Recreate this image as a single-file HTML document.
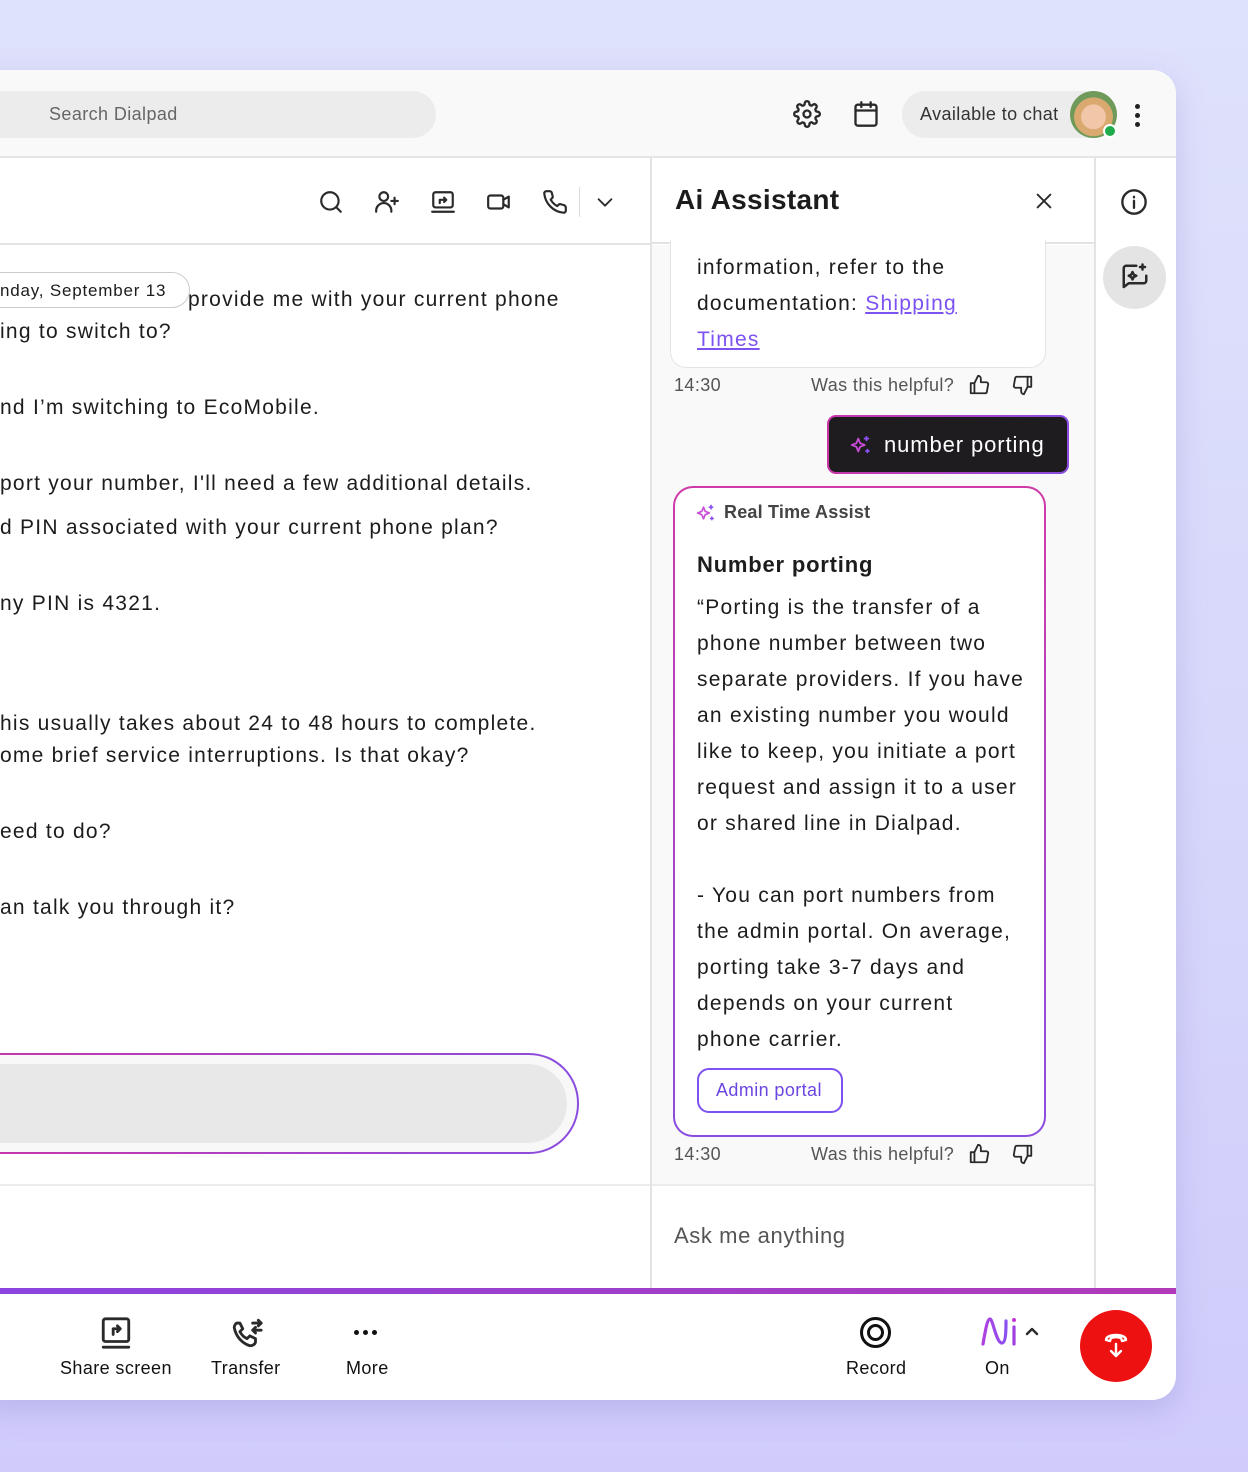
<!DOCTYPE html>
<html><head><meta charset="utf-8">
<style>
*{margin:0;padding:0;box-sizing:border-box}
body{width:1248px;height:1472px;overflow:hidden;background:linear-gradient(180deg,#dfe2fb 0%,#d6d6fb 60%,#d0cbfb 100%);font-family:"Liberation Sans",sans-serif;color:#1c1c1c;position:relative}
.win{position:absolute;left:-30px;top:70px;width:1206px;height:1330px;background:#fff;border-radius:24px;overflow:hidden;box-shadow:0 10px 30px rgba(120,110,200,.25)}
.abs{position:absolute}
.t{position:absolute;white-space:nowrap;font-size:21px;color:#1c1c1c}
.c{letter-spacing:1.25px}
.s{letter-spacing:0.4px}
svg{position:absolute;fill:none;stroke:#2a2a2a;stroke-width:2;stroke-linecap:round;stroke-linejoin:round}
</style></head><body>
<div class="win">
 <!-- top bar -->
 <div class="abs" style="left:0;top:0;width:1206px;height:88px;background:#f9f9f9;border-bottom:2px solid #e6e6e6"></div>
 <div class="abs" style="left:0;top:21px;width:466px;height:47px;background:#ececec;border-radius:24px"></div>
 <div class="t s" style="left:79px;top:34px;font-size:18px;color:#666">Search Dialpad</div>
 <svg style="left:823px;top:30px" width="28" height="28" viewBox="0 0 24 24"><circle cx="12" cy="12" r="3"/><path d="M19.4 15a1.65 1.65 0 0 0 .33 1.82l.06.06a2 2 0 1 1-2.830 2.83l-.06-.06a1.65 1.65 0 0 0-1.82-.33 1.65 1.65 0 0 0-1 1.51V21a2 2 0 1 1-4 0v-.09A1.65 1.65 0 0 0 9 19.4a1.650 1.65 0 0 0-1.82.33l-.06.06a2 2 0 1 1-2.83-2.83l.06-.06A1.65 1.65 0 0 0 4.68 15a1.65 1.65 0 0 0-1.51-1H3a2 2 0 1 1 0-4h.09A1.65 1.65 0 0 0 4.6 9a1.65 1.65 0 0 0-.33-1.82l-.06-.06a2 2 0 1 1 2.83-2.83l.06.06A1.65 1.65 0 0 0 9 4.68a1.65 1.65 0 0 0 1-1.51V3a2 2 0 1 1 4 0v.09a1.65 1.65 0 0 0 1 1.51 1.65 1.65 0 0 0 1.82-.33l.06-.06a2 2 0 1 1 2.830 2.83l-.06.06A1.65 1.65 0 0 0 19.4 9a1.65 1.65 0 0 0 1.51 1H21a2 2 0 1 1 0 4h-.09a1.65 1.65 0 0 0-1.51 1z"/></svg>
 <svg style="left:882px;top:30px" width="28" height="28" viewBox="0 0 24 24"><rect x="3" y="4" width="18" height="18" rx="2"/><path d="M3 9h18M8 2v4M16 2v4"/></svg>
 <div class="abs" style="left:932px;top:21px;width:215px;height:47px;background:#ececec;border-radius:24px"></div>
 <div class="t s" style="left:950px;top:34px;font-size:18px;color:#333">Available to chat</div>
 <div class="abs" style="left:1100px;top:21px;width:47px;height:47px;border-radius:50%;background:radial-gradient(circle at 50% 55%,#f2c6a8 0 35%,#d9a96f 36% 55%,#6f9a5a 56%)"></div>
 <div class="abs" style="left:1133px;top:54px;width:14px;height:14px;border-radius:50%;background:#1faa4b;border:2px solid #fff"></div>
 <div class="abs" style="left:1165px;top:34px;width:5px;height:5px;border-radius:50%;background:#222;box-shadow:0 9px 0 #222,0 18px 0 #222"></div>

 <!-- left header -->
 <div class="abs" style="left:0;top:173px;width:680px;height:2px;background:#e3e3e3"></div>
 <svg style="left:348px;top:119px" width="26" height="26" viewBox="0 0 24 24"><circle cx="11" cy="11" r="8"/><path d="M17 17l4 4"/></svg>
 <svg style="left:403px;top:119px" width="28" height="26" viewBox="0 0 24 24"><circle cx="9" cy="7" r="4"/><path d="M2 21v-1a7 7 0 0 1 14 0v1M19 8v6M16 11h6"/></svg>
 <svg style="left:459px;top:119px" width="28" height="26" viewBox="0 0 24 24"><rect x="3" y="3" width="18" height="14" rx="2"/><path d="M2 21h20M9 13v-3h6M13 8l2 2-2 2"/></svg>
 <svg style="left:515px;top:119px" width="28" height="26" viewBox="0 0 24 24"><rect x="2" y="6" width="14" height="12" rx="2"/><path d="M16 10l5-3v10l-5-3"/></svg>
 <svg style="left:572px;top:119px" width="26" height="26" viewBox="0 0 24 24"><path d="M22 16.9v3a2 2 0 0 1-2.2 2A19.8 19.8 0 0 1 2.1 4.2 2 2 0 0 1 4.1 2h3a2 2 0 0 1 2 1.7c.1.9.4 1.8.7 2.7a2 2 0 0 1-.5 2.1L8 9.8a16 16 0 0 0 6 6l1.3-1.3a2 2 0 0 1 2.1-.4c.9.3 1.8.6 2.7.7a2 2 0 0 1 1.7 2z"/></svg>
 <div class="abs" style="left:609px;top:117px;width:1px;height:30px;background:#ddd"></div>
 <svg style="left:624px;top:121px" width="22" height="22" viewBox="0 0 24 24"><path d="M5 9l7 7 7-7"/></svg>

 <!-- chat texts -->
 <div class="abs" style="left:0;top:202px;width:220px;height:36px;border:1px solid #ccc;border-radius:18px;background:#fff"></div>
 <div class="t" style="left:30px;top:211px;font-size:17px;letter-spacing:0.8px">nday, September 13</div>
 <div class="t c" style="left:218px;top:218px">provide me with your current phone</div>
 <div class="t c" style="left:30px;top:250px">ing to switch to?</div>
 <div class="t c" style="left:30px;top:326px">nd I’m switching to EcoMobile.</div>
 <div class="t c" style="left:30px;top:402px">port your number, I'll need a few additional details.</div>
 <div class="t c" style="left:30px;top:446px">d PIN associated with your current phone plan?</div>
 <div class="t c" style="left:30px;top:522px">ny PIN is 4321.</div>
 <div class="t c" style="left:30px;top:642px">his usually takes about 24 to 48 hours to complete.</div>
 <div class="t c" style="left:30px;top:674px">ome brief service interruptions. Is that okay?</div>
 <div class="t c" style="left:30px;top:750px">eed to do?</div>
 <div class="t c" style="left:30px;top:826px">an talk you through it?</div>

 <!-- input -->
 <div class="abs" style="left:0;top:983px;width:609px;height:101px;border-radius:0 50px 50px 0;background:linear-gradient(90deg,#c936a8,#8a4de0);padding:2px 2px 2px 0">
  <div style="width:100%;height:100%;background:#f8f8f8;border-radius:0 48px 48px 0;padding:9px 10px 9px 0"><div style="width:100%;height:100%;background:#e8e8e8;border-radius:0 40px 40px 0"></div></div>
 </div>
 <div class="abs" style="left:0;top:1114px;width:680px;height:2px;background:#ececec"></div>

 <!-- AI panel -->
 <div class="abs" style="left:680px;top:88px;width:2px;height:1130px;background:#e3e3e3"></div>
 <div class="abs" style="left:682px;top:88px;width:442px;height:86px;background:#fff;border-bottom:2px solid #e3e3e3"></div>
 <div class="t" style="left:705px;top:114px;font-size:28px;font-weight:bold;letter-spacing:0.3px">Ai Assistant</div>
 <svg style="left:1063px;top:120px" width="22" height="22" viewBox="0 0 24 24"><path d="M5 5l14 14M19 5L5 19"/></svg>
 <div class="abs" style="left:682px;top:175px;width:442px;height:940px;background:#f9f9f9"></div>
 <div class="abs" style="left:1124px;top:88px;width:2px;height:1130px;background:#e3e3e3"></div>

 <div class="abs" style="left:700px;top:170px;width:376px;height:128px;background:#fff;border:1px solid #e4e4e4;border-top:none;border-radius:0 0 16px 16px"></div>
 <div class="t c" style="left:727px;top:186px">information, refer to the</div>
 <div class="t c" style="left:727px;top:222px">documentation: <span style="color:#7c52f0;text-decoration:underline">Shipping</span></div>
 <div class="t c" style="left:727px;top:258px;color:#7c52f0;text-decoration:underline">Times</div>
 <div class="t s" style="left:704px;top:305px;font-size:18px;color:#555">14:30</div>
 <div class="t s" style="left:841px;top:305px;font-size:18px;color:#555">Was this helpful?</div>
 <svg style="left:998px;top:304px" width="22" height="22" viewBox="0 0 24 24"><path d="M7 10v11H3V10zM7 10l4-8a3 3 0 0 1 3 3v4h6a2 2 0 0 1 2 2.3l-1.4 8A2 2 0 0 1 18.6 21H7"/></svg>
 <svg style="left:1042px;top:304px" width="22" height="22" viewBox="0 0 24 24"><path d="M17 14V3h4v11zM17 14l-4 8a3 3 0 0 1-3-3v-4H4a2 2 0 0 1-2-2.3l1.4-8A2 2 0 0 1 5.4 3H17"/></svg>

 <div class="abs" style="left:857px;top:345px;width:242px;height:59px;border-radius:9px;background:linear-gradient(90deg,#c936a8,#8a4de0);padding:2px"><div style="width:100%;height:100%;background:#1e1c1f;border-radius:7px"></div></div>
 <svg style="left:880px;top:364px;stroke:#c94cd6" width="22" height="22" viewBox="0 0 24 24"><path d="M9 5l2 5 5 2-5 2-2 5-2-5-5-2 5-2z"/><path d="M18 3v4M16 5h4M19 17v3M17.5 18.5h3" stroke="#8a50f0"/></svg>
 <div class="t" style="left:914px;top:362px;color:#fff;font-size:22px;letter-spacing:0.9px">number porting</div>

 <div class="abs" style="left:703px;top:416px;width:373px;height:651px;border-radius:20px;background:linear-gradient(180deg,#d03aa8,#8a4de0);padding:2px"><div style="width:100%;height:100%;background:#fff;border-radius:18px"></div></div>
 <svg style="left:726px;top:433px;stroke:#c94cd6" width="20" height="20" viewBox="0 0 24 24"><path d="M9 5l2 5 5 2-5 2-2 5-2-5-5-2 5-2z"/><path d="M18 3v4M16 5h4M19 17v3M17.5 18.5h3" stroke="#8a50f0"/></svg>
 <div class="t" style="left:754px;top:432px;font-size:18px;font-weight:bold;color:#444;letter-spacing:0.2px">Real Time Assist</div>
 <div class="t" style="left:727px;top:482px;font-weight:bold;font-size:22px;letter-spacing:0.8px">Number porting</div>
 <div class="t c" style="left:727px;top:520px;line-height:36px;white-space:pre">“Porting is the transfer of a
phone number between two
separate providers. If you have
an existing number you would
like to keep, you initiate a port
request and assign it to a user
or shared line in Dialpad.

- You can port numbers from
the admin portal. On average,
porting take 3-7 days and
depends on your current
phone carrier.</div>
 <div class="abs" style="left:727px;top:998px;width:146px;height:45px;border:2px solid #7c52f0;border-radius:12px"></div>
 <div class="t s" style="left:746px;top:1010px;font-size:18px;color:#6b45e0">Admin portal</div>
 <div class="t s" style="left:704px;top:1074px;font-size:18px;color:#555">14:30</div>
 <div class="t s" style="left:841px;top:1074px;font-size:18px;color:#555">Was this helpful?</div>
 <svg style="left:998px;top:1073px" width="22" height="22" viewBox="0 0 24 24"><path d="M7 10v11H3V10zM7 10l4-8a3 3 0 0 1 3 3v4h6a2 2 0 0 1 2 2.3l-1.4 8A2 2 0 0 1 18.6 21H7"/></svg>
 <svg style="left:1042px;top:1073px" width="22" height="22" viewBox="0 0 24 24"><path d="M17 14V3h4v11zM17 14l-4 8a3 3 0 0 1-3-3v-4H4a2 2 0 0 1-2-2.3l1.4-8A2 2 0 0 1 5.4 3H17"/></svg>
 <div class="abs" style="left:682px;top:1114px;width:442px;height:2px;background:#ececec"></div>
 <div class="t" style="left:704px;top:1153px;font-size:22px;color:#555;letter-spacing:0.6px">Ask me anything</div>

 <!-- right rail -->
 <svg style="left:1150px;top:118px" width="28" height="28" viewBox="0 0 24 24"><circle cx="12" cy="12" r="10"/><path d="M12 11v6M12 7.5v.5"/></svg>
 <div class="abs" style="left:1133px;top:176px;width:63px;height:63px;border-radius:50%;background:#e4e4e4"></div>
 <svg style="left:1150px;top:192px" width="30" height="30" viewBox="0 0 24 24"><path d="M13 3H5a2 2 0 0 0-2 2v15l4-3h12a2 2 0 0 0 2-2v-4M10 8l1 2 2 1-2 1-1 2-1-2-2-1 2-1zM18 2v4M16 4h4"/></svg>

 <!-- bottom bar -->
 <div class="abs" style="left:0;top:1218px;width:1206px;height:6px;background:linear-gradient(90deg,#8a44e0,#b03ab8)"></div>
 <svg style="left:129px;top:1246px" width="34" height="34" viewBox="0 0 24 24"><rect x="3" y="2" width="18" height="16" rx="1.5"/><path d="M3 22h18M10 13v-4h5M13 7l2 2-2 2"/></svg>
 <div class="t s" style="left:90px;top:1288px;font-size:18px;color:#111">Share screen</div>
 <svg style="left:260px;top:1246px" width="34" height="34" viewBox="0 0 24 24"><path d="M14 21c-6-2-10-7-11-13 0-1 1-3 2-3l2 0 2 4-2 2c1 2 3 4 5 5l2-2 4 2v2c0 2-2 3-4 3zM16 5h6M20 3l2 2-2 2M22 10h-6M18 8l-2 2 2 2"/></svg>
 <div class="t s" style="left:241px;top:1288px;font-size:18px;color:#111">Transfer</div>
 <div class="abs" style="left:384px;top:1260px;width:5px;height:5px;border-radius:50%;background:#111;box-shadow:9px 0 0 #111,18px 0 0 #111"></div>
 <div class="t s" style="left:376px;top:1288px;font-size:18px;color:#111">More</div>
 <div class="abs" style="left:890px;top:1247px;width:31px;height:31px;border-radius:50%;border:3px solid #111"></div>
 <div class="abs" style="left:897px;top:1254px;width:17px;height:17px;border-radius:50%;border:3px solid #111"></div>
 <div class="t s" style="left:876px;top:1288px;font-size:18px;color:#111">Record</div>
 <svg style="left:1010px;top:1245px;stroke-width:3.2" width="38" height="32" viewBox="0 0 38 32"><defs><linearGradient id="g" x1="0" x2="1"><stop offset="0" stop-color="#b040e0"/><stop offset="1" stop-color="#8a50f0"/></linearGradient></defs><path d="M3 29C5 18 7 4 10 4s6 24 12 24c4 0 4-14 4-22" stroke="url(#g)"/><path d="M34 12v17" stroke="#a040e0"/><circle cx="34" cy="5" r="2" fill="#c036d0" stroke="none"/></svg>
 <svg style="left:1054px;top:1253px;stroke-width:2.4" width="16" height="16" viewBox="0 0 16 16"><path d="M3 11l5-5 5 5"/></svg>
 <div class="t s" style="left:1015px;top:1288px;font-size:18px;color:#111">On</div>
 <div class="abs" style="left:1110px;top:1240px;width:72px;height:72px;border-radius:50%;background:#ee1111"></div>
 <svg style="left:1132px;top:1260px;stroke:#fff;stroke-width:2.4" width="28" height="30" viewBox="0 0 28 30"><path d="M4 10c0-3 4-5 10-5s10 2 10 5l-4 1-1-3c-3-1-7-1-10 0l-1 3zM14 14v12M9 21l5 5 5-5"/></svg>
</div>
</body></html>
